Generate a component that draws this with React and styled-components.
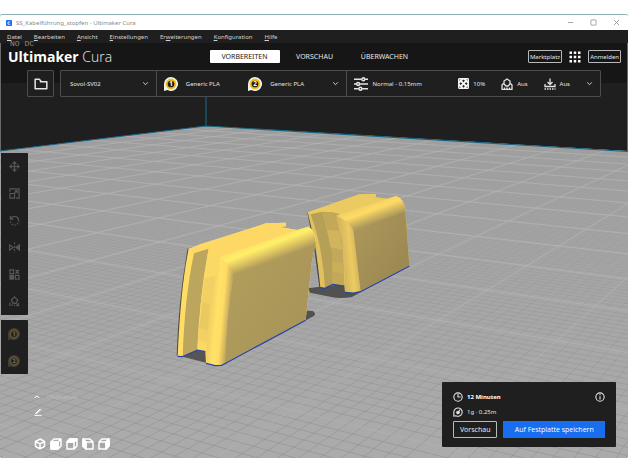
import React from 'react';
import styled, { createGlobalStyle } from 'styled-components';

const GlobalStyle = createGlobalStyle`
  * {
    box-sizing: border-box;
  }
  body {
    margin: 0;
    background: #fff;
    font-family: 'Noto Sans', 'Open Sans', sans-serif;
    font-size: 6px;
  }
  button {
    margin: 0;
    padding: 0;
    border: 0;
    background: none;
    color: inherit;
    font: inherit;
  }
  svg {
    display: block;
    flex: none;
  }
`;

const Page = styled.div`
  display: flex;
  flex-direction: column;
  min-height: 100vh;
  padding: 14px 0;
`;

const AppWindow = styled.div`
  flex: 1;
  display: flex;
  flex-direction: column;
  overflow: hidden;
  border-radius: 3px;
  background: #1f1f1f;
`;

const TitleBar = styled.div`
  display: flex;
  align-items: center;
  gap: 4px;
  height: 16px;
  padding: 0 8px 0 6px;
  border-top: 1px solid #8fb3b3;
  background: #fff;
  color: #8b8b8b;
`;

const Title = styled.span`
  flex: 1;
`;

const WindowButtons = styled.div`
  display: flex;
  gap: 16px;
`;

const MenuBar = styled.nav`
  display: flex;
  align-items: center;
  gap: 12px;
  height: 13px;
  padding: 0 7px;
  color: #d2d2d2;
`;

const Main = styled.main`
  position: relative;
  flex: 1;
  display: flex;
  flex-direction: column;
  border: 1px solid #6a6a6a;
  border-width: 0 1px;
`;

const Scene = styled.svg`
  position: absolute;
  inset: -13px -1px 0;
  width: calc(100% + 2px);
  height: calc(100% + 13px);
`;

const Top = styled.div`
  position: relative;
  background: linear-gradient(#161616 40px, transparent 40px);
`;

const Header = styled.header`
  display: grid;
  grid-template-columns: 1fr auto 1fr;
  align-items: center;
  height: 27px;
  padding: 0 6px 0 7px;
`;

const Logo = styled.div`
  font-family: 'Open Sans', sans-serif;
  font-size: 14px;
  line-height: 26px;
  font-weight: 300;
  color: #eee;

  b {
    font-weight: 700;
    color: #fff;
  }
`;

const Overlay = styled.div`
  position: absolute;
  left: 9px;
  top: -4px;
  font: 8px/9px 'Liberation Mono', monospace;
  color: #8d8d8d;
`;

const Tabs = styled.div`
  display: flex;
`;

const StageTab = styled.button`
  width: 70px;
  height: 13px;
  border-radius: 1px;
  background: ${p => (p.$active ? '#fff' : 'none')};
  color: ${p => (p.$active ? '#222' : '#e6e6e6')};
  font-size: 7px;
`;

const HeaderActions = styled.div`
  display: flex;
  align-items: center;
  justify-content: flex-end;
  gap: 7px;
`;

const OutlineButton = styled.button`
  height: ${p => (p.$tall ? 17 : 13)}px;
  padding: 0 ${p => (p.$tall ? 6 : 1)}px;
  border: 1px solid #b9b9b9;
  border-radius: 1px;
  color: #e8e8e8;
`;

const StageMenu = styled.div`
  display: flex;
  gap: 6px;
  height: 27px;
  padding: 0 26px;
  color: #e4e4e4;
`;

const FolderButton = styled.button`
  display: grid;
  place-items: center;
  width: 27px;
  border: 1px solid #4c4c4c;
  border-radius: 1px;
  background: #1f1f1f;
`;

const Selectors = styled.div`
  flex: 1;
  display: grid;
  grid-template-columns: 95fr 191fr 254fr;
  border: 1px solid #4c4c4c;
  border-radius: 1px;
  background: #1f1f1f;
`;

const Selector = styled.button`
  display: flex;
  align-items: center;
  gap: ${p => p.$gap || 0}px;
  padding: 0 7px 0 ${p => p.$left || 7}px;
  border-left: ${p => (p.$first ? 0 : 1)}px solid #4c4c4c;
  text-align: left;
`;

const Part = styled.span`
  flex: ${p => (p.$grow ? '1' : 'none')};
  display: flex;
  align-items: center;
  gap: ${p => p.$gap || 4}px;
`;

const Body = styled.div`
  position: relative;
  flex: 1;
  display: flex;
  justify-content: space-between;
`;

const LeftColumn = styled.div`
  display: flex;
  flex-direction: column;
  padding: 56px 0 8px;
`;

const ToolGroup = styled.div`
  display: flex;
  flex-direction: column;
  width: 27px;
  margin-bottom: 5px;
  padding-right: 1px;
  border-radius: 0 1px 1px 0;
  background: #1f1f1f;
  color: #565656;
`;

const Tool = styled.button`
  display: grid;
  place-items: center;
  height: 27px;
`;

const ObjectArea = styled.div`
  display: flex;
  flex-direction: column;
  gap: 7px;
  margin-top: auto;
  padding-left: 33px;
  color: #fff;
`;

const ObjectToggle = styled.button`
  display: flex;
  align-items: center;
  gap: 7px;
  height: 8px;

  span {
    color: #bababa;
  }
`;

const RenameButton = styled.button`
  width: 8px;
  height: 8px;
`;

const ViewButtons = styled.div`
  display: flex;
  gap: 4px;
  padding-top: 15px;
`;

const ActionPanel = styled.section`
  align-self: flex-end;
  width: 174px;
  margin: 0 11px 11px 0;
  padding: 9px 11px;
  border-radius: 1px;
  background: #1f1f1f;
  color: #e4e4e4;
`;

const InfoRow = styled.div`
  display: flex;
  align-items: center;
  gap: 4px;
  height: 12px;
  margin-bottom: 3px;

  strong {
    flex: 1;
    font-size: 6px;
    color: #fff;
  }
`;

const ActionButtons = styled.div`
  display: flex;
  gap: 6px;
  font-size: 7px;
`;

const SaveButton = styled.button`
  flex: 1;
  height: 17px;
  background: #196ef0;
  color: #fff;
  font-family: 'Open Sans', sans-serif;
`;

const Icon = ({ size = 12, children, ...rest }) => (
  <svg width={size} height={size} viewBox="0 0 24 24" fill="none" stroke="currentColor" strokeWidth="2.6" aria-hidden="true" {...rest}>
    {children}
  </svg>
);

const Chevron = () => (
  <Icon size={7} strokeWidth="3"><path d="M4 8l8 8 8-8" /></Icon>
);

const Extruder = ({ number, dim, size = 14 }) => (
  <Icon size={size} stroke="none">
    <path d="M12 0a12 12 0 1 1-6 22.400L0 24V12A12 12 0 0 1 12 0z" fill={dim ? '#3f3f3f' : '#f2f2f2'} />
    <circle cx="12" cy="12" r="7.5" fill="#1f1f1f" stroke={dim ? '#665024' : '#f5bd1b'} strokeWidth="3.5" />
    <text x="12" y="16" textAnchor="middle" fontSize="11" fontWeight="700" fill={dim ? '#777' : '#fff'}>{number}</text>
  </Icon>
);

// Build plate in homogeneous coordinates: rear corner plus two vanishing points
const CORNER = [206, 126];
const VANISH_X = [-1188, 43.5];
const VANISH_Y = [888, 43.5];
const STEP_X = -0.0203;
const STEP_Y = -0.0365;
const NEAR = 0.1;

const project = (i, j) => {
  const a = STEP_X * i;
  const b = STEP_Y * j;
  const w = 1 + a + b;
  return [0, 1].map(k => ((CORNER[k] + a * VANISH_X[k] + b * VANISH_Y[k]) / w).toFixed(1)).join(' ');
};

const gridPath = (step, skip) => {
  let d = '';
  for (let n = 0; n * step < 43; n++) {
    if (skip && n % skip === 0) continue;
    const v = n * step;
    const endY = (NEAR - 1 - STEP_X * v) / STEP_Y;
    const endX = (NEAR - 1 - STEP_Y * v) / STEP_X;
    if (endY > 0) d += `M${project(v, 0)}L${project(v, endY)}`;
    if (endX > 0) d += `M${project(0, v)}L${project(endX, v)}`;
  }
  return d;
};

const MAJOR = gridPath(1);
const MINOR = gridPath(0.1, 10);

const BuildPlate = () => (
  <g>
    <path d="M206 126L0 151V458H628V151z" fill="url(#plate)" />
    <clipPath id="plateClip"><path d="M206 126L0 151V458H628V151z" /></clipPath>
    <g clipPath="url(#plateClip)" fill="none">
      <path d={MINOR} stroke="url(#minor)" strokeWidth="0.6" />
      <path d={MAJOR} stroke="url(#major)" strokeWidth="1" />
    </g>
    <path d="M206 97V126M0 151L206 126L628 151.500" fill="none" stroke="#176482" strokeWidth="1.200" />
  </g>
);

const RearModel = () => (
  <g transform="translate(290 180) scale(.3333)">
    <path d="M55 325L90 320L163 312L212 337L186 351Q150 357 120 350L60 338z" fill="#515151" />
    <path d="M52 97L60 102L94 322L88 322L72 200z" fill="#4d4a3c" />
    <path d="M53 97L88 85L208 43L258 42V51L292 56L318 48Q340 57 346 85L358 258L212 335L190 339L165 337L163 318L128 312L105 325L91 322L78 200z" fill="#dfc160" />
    <path d="M53 97L88 85L208 43L258 42L256 51L230 50L292 56L318 48L150 112L139 106L150 103L130 97L98 95L62 103z" fill="#ecca62" />
    <path d="M62 103L98 95Q118 180 128 220V312L105 325Q98 200 62 103z" fill="#b69f57" />
    <path d="M98 95L130 97L150 103L139 110L158 190L163 318L128 312V220z" fill="#c2a858" />
    <path d="M112 149L148 153L158 210L121 202z" fill="#d1b45d" />
    <path d="M128 245L161 250L163 280L128 276z" fill="#caaf5b" />
    <path d="M139 107L165 118L190 150L212 335L190 339L165 337Q168 200 139 107z" fill="url(#edge2)" />
    <path d="M190 151L346 92L358 258L212 335z" fill="url(#side2)" />
    <path d="M139 107L318 48Q344 55 346 93L190 151Q175 120 139 107z" fill="url(#roll2)" />
    <path d="M91 323L105 325L128 313L163 318M165 337L190 339L212 335L358 259" fill="none" stroke="#2741a8" strokeWidth="3.500" />
  </g>
);

const FrontModel = () => (
  <g transform="translate(160 210) scale(.3333)">
    <path d="M438 302L458 303Q472 312 460 319L430 335z" fill="#515151" />
    <path d="M68 440L112 418L138 420V458z" fill="#555" />
    <path d="M83 115L86 118L60 436L50 437Q55 270 83 115z" fill="#514d3d" />
    <path d="M86 117L120 103L318 40L378 38V49L360 51L412 60L445 50Q464 62 468 90L455 160L437 330L200 458Q185 467 165 467L138 460L136 425L112 420L68 440L53 438Q62 230 86 117z" fill="#ffdc65" />
    <path d="M86 117L318 40L378 38L376 49L352 51L412 60L180 145L146 116L102 130z" fill="#fdd865" />
    <path d="M102 130L146 116Q120 250 112 420L68 440Q74 260 102 130z" fill="#bca65d" />
    <path d="M146 116L180 142L164 250L138 425L112 420Q120 250 146 116z" fill="#fbd965" />
    <path d="M134 205L167 198L162 282L124 275zM119 345L152 348L140 400L116 390z" fill="#f2d063" />
    <path d="M127 275L151 282L146 310L161 312L148 362L118 355z" fill="#ebc961" />
    <path d="M178 142Q210 150 220 197Q200 330 200 458Q185 467 165 467L138 460Q144 280 164 210z" fill="url(#edge1)" />
    <path d="M220 195L466 102L455 160L437 330L196 460Q200 320 220 195z" fill="url(#side1)" />
    <path d="M178 142L412 60L445 50Q468 60 467 104L220 201Q214 163 178 142z" fill="url(#roll1)" />
    <path d="M53 439L68 440L112 420L136 425M138 460L165 467L185 466L200 458L437 331" fill="none" stroke="#2741a8" strokeWidth="3.500" />
  </g>
);

const Viewport = () => (
  <Scene viewBox="0 30 628 428" preserveAspectRatio="xMidYMid slice" aria-hidden="true">
    <defs>
      <linearGradient id="plate" x1="0" y1="126" x2="0" y2="458" gradientUnits="userSpaceOnUse">
        <stop offset="0" stopColor="#a1a1a1" />
        <stop offset="1" stopColor="#ababab" />
      </linearGradient>
      <linearGradient id="minor" x1="0" y1="126" x2="0" y2="458" gradientUnits="userSpaceOnUse">
        <stop offset="0" stopColor="#909090" stopOpacity="0.1" />
        <stop offset="0.35" stopColor="#8f8f8f" stopOpacity="0.35" />
        <stop offset="1" stopColor="#8c8c8c" stopOpacity="0.9" />
      </linearGradient>
      <linearGradient id="major" x1="0" y1="126" x2="0" y2="458" gradientUnits="userSpaceOnUse">
        <stop offset="0" stopColor="#b2b2b2" stopOpacity="0.7" />
        <stop offset="0.4" stopColor="#b4b4b4" stopOpacity="0.8" />
        <stop offset="1" stopColor="#b0b0b0" stopOpacity="0.7" />
      </linearGradient>
      <linearGradient id="roll1" x1="305" y1="97" x2="327" y2="155" gradientUnits="userSpaceOnUse">
        <stop offset="0" stopColor="#ffe467" />
        <stop offset="0.25" stopColor="#fff069" />
        <stop offset="0.6" stopColor="#e2c862" />
        <stop offset="1" stopColor="#b09c5b" />
      </linearGradient>
      <linearGradient id="edge1" x1="142" y1="330" x2="208" y2="336" gradientUnits="userSpaceOnUse">
        <stop offset="0" stopColor="#eecb61" />
        <stop offset="0.4" stopColor="#ffe267" />
        <stop offset="0.65" stopColor="#ffdc65" />
        <stop offset="1" stopColor="#b8a25c" />
      </linearGradient>
      <linearGradient id="side1" x1="220" y1="200" x2="430" y2="330" gradientUnits="userSpaceOnUse">
        <stop offset="0" stopColor="#b09c5b" />
        <stop offset="1" stopColor="#a99558" />
      </linearGradient>
      <linearGradient id="roll2" x1="230" y1="78" x2="249" y2="130" gradientUnits="userSpaceOnUse">
        <stop offset="0" stopColor="#f6d263" />
        <stop offset="0.3" stopColor="#ffdb65" />
        <stop offset="1" stopColor="#ab975a" />
      </linearGradient>
      <linearGradient id="edge2" x1="155" y1="250" x2="206" y2="245" gradientUnits="userSpaceOnUse">
        <stop offset="0" stopColor="#d0b35c" />
        <stop offset="0.6" stopColor="#edca62" />
        <stop offset="1" stopColor="#d0b35c" />
      </linearGradient>
      <linearGradient id="side2" x1="190" y1="150" x2="350" y2="260" gradientUnits="userSpaceOnUse">
        <stop offset="0" stopColor="#ab975a" />
        <stop offset="1" stopColor="#9b8852" />
      </linearGradient>
    </defs>
    <BuildPlate />
    <RearModel />
    <FrontModel />
  </Scene>
);

const TOOLS = [
  ['Verschieben', <path d="M12 2v20M2 12h20M8 6l4-4 4 4M8 18l4 4 4-4M6 8l-4 4 4 4M18 8l4 4-4 4" />],
  ['Skalieren', <path d="M2 8V2h20v20h-7M2 12h10v10H2zM12 11l6-6M12 6h6v6" />],
  ['Drehen', <><path d="M3 2v7h7M4 8a9 9 0 0 1 17 4" /><path d="M21 12A9 9 0 0 1 3 14" strokeDasharray="3 3" /></>],
  ['Spiegeln', <><path d="M1 6l8 6-8 6z" /><path d="M23 6l-8 6 8 6z" fill="currentColor" /><path d="M12 1v22" strokeDasharray="4 3" /></>],
  ['Einstellungen pro Objekt', <><path d="M2 2h8v8H2zM14 14h8v8h-8z" /><path d="M2 14h8v8H2z" fill="currentColor" /><path d="M14 2l8 8M22 2l-8 8M18 2v8" /></>],
  ['Stützstruktur', <><path d="M12 2l7 7-4 7H9L5 9z" /><path d="M2 14v8M7 18v4M12 19v3M16 22l6-6M16 16l6 6" /></>]
];

const VIEWS = [
  ['3D-Ansicht', null],
  ['Vorderansicht', 'M2 8h14v14H2z'],
  ['Draufsicht', 'M7 2h15l-6 6H2z'],
  ['Ansicht von links', 'M2 2l6 6v14l-6-5z'],
  ['Ansicht von rechts', 'M16 8l6-6v14l-6 6z']
];

const ViewIcon = ({ index, face }) => {
  if (!face) {
    return <Icon size={12} strokeWidth="3"><path d="M12 2l9 5v10l-9 5-9-5V7zM3 7l9 5 9-5M12 12v10" /></Icon>;
  }
  return (
    <Icon size={12} strokeWidth="3" strokeLinejoin="round">
      <path d={index === 3 ? 'M8 8h14v14H8zM8 8L2 2h14l6 6M2 2v15l6 5' : 'M2 8h14v14H2zM2 8l6-6h14v14l-6 6M16 8l6-6'} />
      <path d={face} fill="currentColor" />
    </Icon>
  );
};

const App = () => (
  <Page>
    <GlobalStyle />
    <AppWindow>
      <TitleBar>
        <Icon size={6} stroke="none">
          <rect width="24" height="24" rx="4" fill="#196ef0" />
          <path d="M17 8H8v9h9" fill="none" stroke="#fff" strokeWidth="3" />
        </Icon>
        <Title>SS_Kabelführung_stopfen - Ultimaker Cura</Title>
        <WindowButtons>
          <button aria-label="Minimieren"><Icon size={7}><path d="M3 12h18" /></Icon></button>
          <button aria-label="Maximieren"><Icon size={7}><rect x="3" y="3" width="18" height="18" rx="3" /></Icon></button>
          <button aria-label="Schließen"><Icon size={7}><path d="M3 3l18 18M21 3L3 21" /></Icon></button>
        </WindowButtons>
      </TitleBar>
      <MenuBar>
        <button><u>D</u>atei</button>
        <button><u>B</u>earbeiten</button>
        <button><u>A</u>nsicht</button>
        <button><u>E</u>instellungen</button>
        <button>Er<u>w</u>eiterungen</button>
        <button><u>K</u>onfiguration</button>
        <button><u>H</u>ilfe</button>
      </MenuBar>
      <Main>
        <Viewport />
        <Top>
          <Overlay>NO DC</Overlay>
          <Header>
            <Logo><b>Ultimaker</b> Cura</Logo>
            <Tabs>
              <StageTab $active>VORBEREITEN</StageTab>
              <StageTab>VORSCHAU</StageTab>
              <StageTab>ÜBERWACHEN</StageTab>
            </Tabs>
            <HeaderActions>
              <OutlineButton>Marktplatz</OutlineButton>
              <button aria-label="Anwendungen">
                <Icon size={12} stroke="none" fill="#fff">
                  <path d="M1 1h5v5H1zM9.500 1h5v5h-5zM18 1h5v5h-5zM1 9.500h5v5H1zM9.500 9.500h5v5h-5zM18 9.500h5v5h-5zM1 18h5v5H1zM9.500 18h5v5h-5zM18 18h5v5h-5z" />
                </Icon>
              </button>
              <OutlineButton>Anmelden</OutlineButton>
            </HeaderActions>
          </Header>
          <StageMenu>
            <FolderButton aria-label="Datei öffnen">
              <Icon size={14}><path d="M2 20V4h7l4 4h9v12zM13 8h-3" strokeLinejoin="round" /></Icon>
            </FolderButton>
            <Selectors>
              <Selector $first $left={9}>
                <Part $grow>Sovol-SV02</Part>
                <Chevron />
              </Selector>
              <Selector>
                <Part $grow $gap={8}><Extruder number="1" />Generic PLA</Part>
                <Part $grow $gap={8}><Extruder number="2" />Generic PLA</Part>
                <Chevron />
              </Selector>
              <Selector $gap={16}>
                <Part $grow>
                  <Icon size={14}>
                    <path d="M0 4h13M19 4h5M0 12h4M10 12h14M0 20h8M14 20h10" />
                    <circle cx="16" cy="4" r="2.500" />
                    <circle cx="7" cy="12" r="2.500" />
                    <circle cx="11" cy="20" r="2.500" />
                  </Icon>
                  Normal - 0.15mm
                </Part>
                <Part>
                  <Icon size={11} stroke="none">
                    <rect width="24" height="24" rx="3" fill="#f2f2f2" />
                    <path d="M12 3l3 3-3 3-3-3zM12 15l3 3-3 3-3-3zM6 9l3 3-3 3-3-3zM18 9l3 3-3 3-3-3zM3 3h3L3 6zM21 3v3l-3-3zM3 21v-3l3 3zM21 21h-3l3-3z" fill="#1f1f1f" />
                  </Icon>
                  10%
                </Part>
                <Part>
                  <Icon size={12}>
                    <path d="M12 2l6 4v6l-4 4h-4l-4-4V6zM2 23V14l3-3M22 23V14l-3-3M1 23h22M7 23v-4M12 23v-4M17 23v-4" />
                  </Icon>
                  Aus
                </Part>
                <Part>
                  <Icon size={12}>
                    <path d="M12 1v11M7 8l5 5 5-5M2 12v5h20v-5" />
                    <path d="M1 22h22" strokeDasharray="3 2" />
                  </Icon>
                  Aus
                </Part>
                <Chevron />
              </Selector>
            </Selectors>
          </StageMenu>
        </Top>
        <Body>
          <LeftColumn>
            <ToolGroup>
              {TOOLS.map(([label, shape]) => (
                <Tool key={label} aria-label={label}><Icon size={11}>{shape}</Icon></Tool>
              ))}
            </ToolGroup>
            <ToolGroup>
              <Tool><Extruder number="1" dim size={12} /></Tool>
              <Tool><Extruder number="2" dim size={12} /></Tool>
            </ToolGroup>
            <ObjectArea>
              <ObjectToggle>
                <Icon size={6} strokeWidth="4"><path d="M3 16l9-9 9 9" /></Icon>
                <span>Objektliste</span>
              </ObjectToggle>
              <RenameButton aria-label="Umbenennen">
                <Icon size={8} strokeWidth="3"><path d="M1 22h22M5 16L18 3l2 2L8 17H4z" /></Icon>
              </RenameButton>
              <ViewButtons>
                {VIEWS.map(([label, face], index) => (
                  <button key={label} aria-label={label}><ViewIcon index={index} face={face} /></button>
                ))}
              </ViewButtons>
            </ObjectArea>
          </LeftColumn>
          <ActionPanel>
            <InfoRow>
              <Icon size={10}><circle cx="12" cy="12" r="10" /><path d="M12 5v7h6" /></Icon>
              <strong>12 Minuten</strong>
              <button aria-label="Informationen">
                <Icon size={10}><circle cx="12" cy="12" r="10" /><path d="M12 10v8M12 5v3" /></Icon>
              </button>
            </InfoRow>
            <InfoRow>
              <Icon size={10}>
                <path d="M2 22V12a10 10 0 1 1 5 9z" />
                <circle cx="12" cy="13" r="3" fill="currentColor" />
                <path d="M13 12l4-6" />
              </Icon>
              1g · 0.25m
            </InfoRow>
            <ActionButtons>
              <OutlineButton $tall>Vorschau</OutlineButton>
              <SaveButton>Auf Festplatte speichern</SaveButton>
            </ActionButtons>
          </ActionPanel>
        </Body>
      </Main>
    </AppWindow>
  </Page>
);

export default App;
